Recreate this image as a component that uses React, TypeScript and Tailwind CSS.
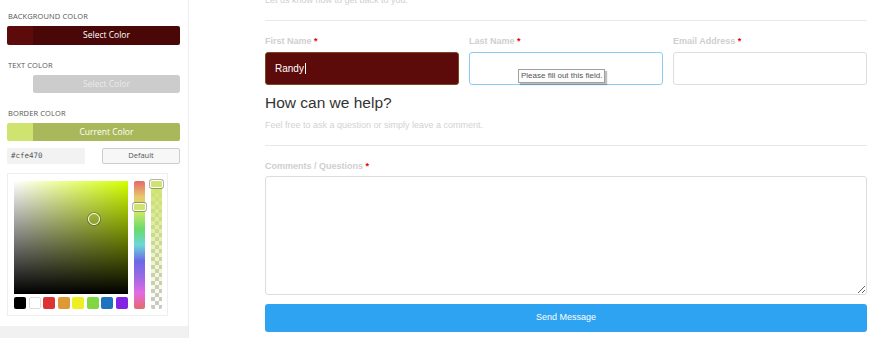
import React from 'react';

const SWATCHES = ['#000000', '#ffffff', '#dd3333', '#dd9933', '#eeee22', '#81d742', '#1e73be', '#8224e3'];

const SideLabel = ({ children }: { children: React.ReactNode }) => (
  <div className="h-[10px] leading-[10px] text-[7.5px] uppercase text-[#555] tracking-[0.1px] mb-[5px] pl-px">{children}</div>
);

const ColorPicker = () => (
  <div className="mt-[9px] w-[161px] h-[143px] border border-[#eee] pl-[6px] pt-[7px] flex">
    <div className="flex flex-col">
      {/* Saturation / value square */}
      <div className="relative w-[114px] h-[113px] bg-[#d4ff00]">
        <div className="absolute inset-0 bg-linear-to-r from-white to-transparent" />
        <div className="absolute inset-0 bg-linear-to-t from-black to-transparent" />
        <div className="absolute left-[74px] top-[32px] w-[12px] h-[12px] rounded-full border-[1.5px] border-white shadow-[0_0_0_1px_rgba(0,0,0,0.25)]" />
      </div>
      <div className="flex gap-[2.5px] mt-[3px]">
        {SWATCHES.map((c) => (
          <div
            key={c}
            className={`w-[12px] h-[12px] rounded-[2px] ${
              c === '#ffffff' ? 'border border-[#ddd]' : ''
            }`}
            style={{ backgroundColor: c }}
          />
        ))}
      </div>
    </div>

    {/* Hue strip */}
    <div className="relative ml-[6px] w-[11px] h-[128px] rounded-[2px] bg-[linear-gradient(to_bottom,#e46a6a,#e8c86a,#c8e86a,#6ada6a,#6ad8d8,#6a6ae4,#9a6ae4,#e46ae4,#e46a6a)]">
      <div className="absolute -left-[1px] top-[22px] w-[13px] h-[8px] rounded-[2px] border-[1.5px] border-white bg-[#cfe470] shadow-[0_0_0_1px_rgba(0,0,0,0.3)]" />
    </div>

    {/* Alpha strip */}
    <div className="relative ml-[6px] w-[11px] h-[128px] rounded-[2px] bg-[repeating-conic-gradient(#c8c8c8_0_25%,#ffffff_0_50%)] bg-size-[8px_8px]">
      <div className="absolute inset-0 rounded-[2px] bg-linear-to-b from-[#cfe470] to-transparent" />
      <div className="absolute -left-[1px] -top-[1px] w-[13px] h-[8px] rounded-[2px] border-[1.5px] border-white bg-[#cfe470] shadow-[0_0_0_1px_rgba(0,0,0,0.3)]" />
    </div>
  </div>
);

const Sidebar = () => (
  <aside className="w-[189px] shrink-0 border-r border-[#eee] flex flex-col font-['Open_Sans',sans-serif]">
    <div className="flex-1 pl-[7px] pt-[11px]">
      <SideLabel>Background Color</SideLabel>
      <div className="flex w-[173px] h-[19px] rounded-[2px] overflow-hidden">
        <div className="w-[26px] bg-[#5c0a0a]" />
        <div className="flex-1 bg-[#4a0707] flex items-center justify-center text-[8.5px] text-white">Select Color</div>
      </div>

      <div className="mt-[15px]">
        <SideLabel>Text Color</SideLabel>
      </div>
      <div className="flex w-[173px] h-[18px] rounded-[2px] overflow-hidden">
        <div className="w-[26px] bg-white" />
        <div className="flex-1 bg-[#cccccc] rounded-[2px] flex items-center justify-center text-[8.5px] text-[#eaeaea]">Select Color</div>
      </div>

      <div className="mt-[15px]">
        <SideLabel>Border Color</SideLabel>
      </div>
      <div className="flex w-[173px] h-[18px] rounded-[2px] overflow-hidden">
        <div className="w-[26px] bg-[#cfe470]" />
        <div className="flex-1 bg-[#a9b85a] flex items-center justify-center text-[8.5px] text-white">Current Color</div>
      </div>

      <div className="mt-[7px] flex items-center justify-between w-[173px] h-[16px]">
        <div className="w-[78px] h-[16px] bg-[#f2f2f2] rounded-[2px] pl-[4px] flex items-center text-[7.5px] text-[#555] font-['DejaVu_Sans_Mono',monospace]">
          #cfe470
        </div>
        <div className="w-[78px] h-[16px] border border-[#ccc] bg-[#f7f7f7] rounded-[2px] flex items-center justify-center text-[7.5px] text-[#555]">
          Default
        </div>
      </div>

      <ColorPicker />
    </div>
    <div className="h-[12px] bg-[#f1f1f1]" />
  </aside>
);

const FieldLabel = ({ children }: { children: React.ReactNode }) => (
  <div className="h-[12px] leading-[12px] text-[9px] font-bold text-[#cfcfcf]">
    {children} <span className="text-[#e60000]">*</span>
  </div>
);

export default function App() {
  return (
    <div className="w-[880px] h-[338px] overflow-hidden bg-white flex">
      <Sidebar />

      <main className="flex-1 pl-[76px] pr-[13px] font-['Liberation_Sans',Arial,sans-serif]">
        <div className="-mt-[7px] h-[14px] leading-[14px] text-[9px] text-[#cfcfcf]">
          Let us know how to get back to you.
        </div>
        <div className="mt-[13px] h-px bg-[#e8e8e8]" />

        <div className="mt-[14px] grid grid-cols-3 gap-x-[10px]">
          <div>
            <FieldLabel>First Name</FieldLabel>
            <div className="mt-[5px] h-[33px] rounded-[3px] bg-[#5c0a0a] border border-[#7a4a1a] flex items-center pl-[9px] text-[10px] text-white">
              Randy<span className="inline-block w-px h-[11px] bg-white ml-px" />
            </div>
          </div>
          <div>
            <FieldLabel>Last Name</FieldLabel>
            <div className="relative mt-[5px] h-[33px] rounded-[3px] border border-[#8ccbf2]">
              <div className="absolute left-[48px] top-[16px] px-[2px] h-[14px] border border-[#a0a0a0] bg-[#fdfdfd] shadow-[2px_2px_1px_rgba(0,0,0,0.25)] flex items-center text-[8px] text-[#555] whitespace-nowrap">
                Please fill out this field.
              </div>
            </div>
          </div>
          <div>
            <FieldLabel>Email Address</FieldLabel>
            <div className="mt-[5px] h-[33px] rounded-[3px] border border-[#ddd]" />
          </div>
        </div>

        <h2 className="mt-[8px] h-[20px] leading-[20px] text-[15.5px] text-[#333]">How can we help?</h2>
        <p className="mt-[6px] h-[12px] leading-[12px] text-[9px] text-[#d2d2d2]">
          Feel free to ask a question or simply leave a comment.
        </p>
        <div className="mt-[14px] h-px bg-[#e8e8e8]" />

        <div className="mt-[14px]">
          <FieldLabel>Comments / Questions</FieldLabel>
        </div>
        <textarea className="mt-[4px] block w-full h-[119px] rounded-[3px] border border-[#ddd] outline-none resize-y" />

        <button className="mt-[9px] w-full h-[28px] rounded-[3px] bg-[#2ea3f2] text-white text-[9px] flex items-center justify-center">
          Send Message
        </button>
      </main>
    </div>
  );
}
